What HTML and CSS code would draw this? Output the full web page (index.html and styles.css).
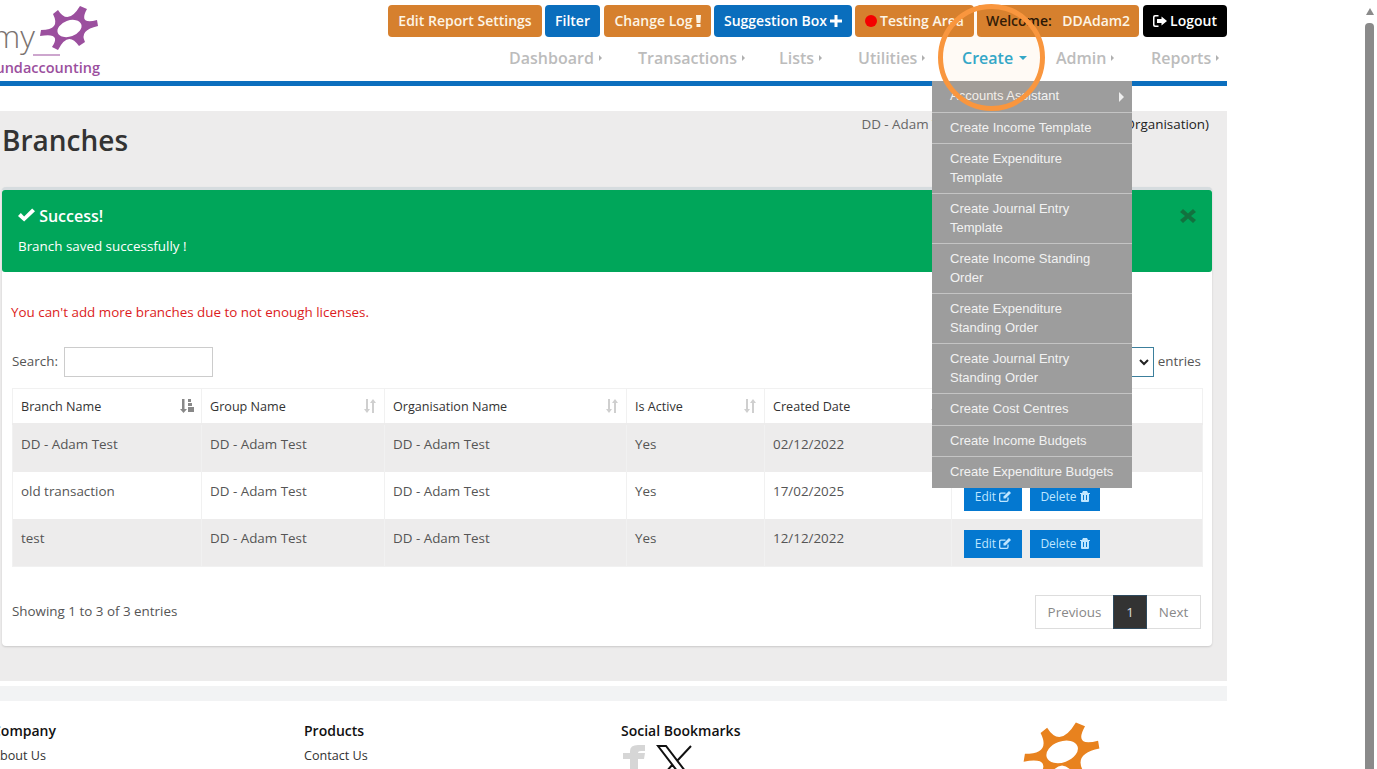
FILE: index.html
```html
<!DOCTYPE html>
<html lang="en">
<head>
<meta charset="UTF-8">
<title>Branches</title>
<link rel="stylesheet" href="styles.css">
</head>
<body>

<svg class="defs" width="0" height="0">
<symbol id="star" viewBox="38 5 62 48">
<path fill="currentColor" d="M80 6 L87 9 Q78 25 97 20 L98 26 Q79 30 85 42 L79 46 Q68 30 58 50 L52 47 Q62 32 40 36 L41 30 Q61 30 53 14 L58 10 Q68 26 80 6 Z"/>
<ellipse cx="69.500" cy="28.500" rx="12.500" ry="8" transform="rotate(-20 69.500 28.500)" fill="#fff"/>
</symbol>
</svg>

<div class="page">

<header class="top">
<svg class="logo" width="101" height="78" viewBox="0 0 101 78">
<text x="35" y="48" text-anchor="end" class="logo-my">my</text>
<rect x="33" y="54.500" width="27" height="1" fill="#9b4f9e"/>
<use href="#star" x="38" y="5" width="62" height="48" color="#9b4f9e"/>
<text x="100" y="73" text-anchor="end" class="logo-name">fundaccounting</text>
</svg>

<div class="top-right">
<div class="btn-row">
<a class="tbtn orange w1">Edit Report Settings</a>
<a class="tbtn blue w2">Filter</a>
<a class="tbtn orange w3">Change Log <svg class="ico" width="5" height="12" viewBox="0 0 5 12"><path fill="currentColor" d="M0 0h5l-.6 8H.6zM.5 9h4v3h-4z"/></svg></a>
<a class="tbtn blue w4">Suggestion Box <svg class="ico" width="12" height="12" viewBox="0 0 12 12"><path fill="currentColor" d="M4.500 0h3v4.500H12v3H7.500V12h-3V7.500H0v-3h4.500z"/></svg></a>
<a class="tbtn orange w5"><span class="dot"></span>Testing Area</a>
<a class="tbtn orange w6"><span class="dark">Welcome:</span>&nbsp; DDAdam2</a>
<a class="tbtn black w7"><svg class="ico" width="14" height="12" viewBox="0 0 14 12"><path fill="currentColor" d="M5.500 0v1.500H2.500q-1 0-1 1v7q0 1 1 1h3V12H2Q0 12 0 10V2Q0 0 2 0zM8.500 1.500 14 6l-5.500 4.500V8H4V4h4.500z"/></svg> Logout</a>
</div>
<nav class="menu">
<a class="m1">Dashboard<i class="arr"></i></a>
<a class="m2">Transactions<i class="arr"></i></a>
<a class="m3">Lists<i class="arr"></i></a>
<a class="m4">Utilities<i class="arr"></i></a>
<a class="m5 active">Create<i class="caret"></i></a>
<a class="m6">Admin<i class="arr"></i></a>
<a class="m7">Reports<i class="arr"></i></a>
</nav>
</div>
</header>

<main class="content">
<div class="title-row">
<h1>Branches</h1>
<p class="context"><span>DD - Adam Test (Group) - DD - Adam Test</span> (Organisation)</p>
</div>

<section class="box">
<div class="alert">
<div>
<h4><svg class="ico" width="17" height="14" viewBox="0 0 18 14"><path fill="currentColor" d="M0 8l3-3 3.500 3.500L15 0l3 3L6.500 14z"/></svg> Success!</h4>
<p>Branch saved successfully !</p>
</div>
<svg class="close" width="16" height="14" viewBox="0 0 16 14"><path fill="currentColor" d="M0 3 3 0l5 4.500L13 0l3 3-5 4 5 4-3 3-5-4.500L3 14l-3-3 5-4z"/></svg>
</div>

<p class="warn">You can't add more branches due to not enough licenses.</p>

<div class="tools">
<label class="search">Search: <input type="text"></label>
<label class="length"><span class="select"><svg width="10" height="7" viewBox="0 0 10 7"><path fill="none" stroke="#222" stroke-width="2" d="M1 1l4 4 4-4"/></svg></span> entries</label>
</div>

<table class="grid">
<thead>
<tr>
<th>Branch Name<svg class="sort on" width="14" height="14" viewBox="0 0 14 14"><path fill="currentColor" d="M2 0h2.500v10H7l-3.500 4L0 10h2zM8 0h3v3H8zM8 4h4v3H8zM8 8h6v5H8z"/></svg></th>
<th>Group Name<svg class="sort" width="14" height="14" viewBox="0 0 14 14"><path fill="currentColor" d="M3 0h2v10h2l-3 4-3-4h2zM9 4H7l3-4 3 4h-2v10H9z"/></svg></th>
<th>Organisation Name<svg class="sort" width="14" height="14" viewBox="0 0 14 14"><path fill="currentColor" d="M3 0h2v10h2l-3 4-3-4h2zM9 4H7l3-4 3 4h-2v10H9z"/></svg></th>
<th>Is Active<svg class="sort" width="14" height="14" viewBox="0 0 14 14"><path fill="currentColor" d="M3 0h2v10h2l-3 4-3-4h2zM9 4H7l3-4 3 4h-2v10H9z"/></svg></th>
<th>Created Date<svg class="sort" width="14" height="14" viewBox="0 0 14 14"><path fill="currentColor" d="M3 0h2v10h2l-3 4-3-4h2zM9 4H7l3-4 3 4h-2v10H9z"/></svg></th>
<th></th>
</tr>
</thead>
<tbody>
<tr>
<td>DD - Adam Test</td><td>DD - Adam Test</td><td>DD - Adam Test</td><td>Yes</td><td>02/12/2022</td>
<td class="acts"><a class="act edit">Edit <svg width="12" height="11" viewBox="0 0 12 11"><path fill="none" stroke="currentColor" stroke-width="1.300" d="M9 6.500V9q0 1.300-1.300 1.300H2Q.7 10.300.7 9V3.500q0-1.300 1.300-1.300h4.500"/><path fill="currentColor" d="M10 0l2 2-5.500 5.500H4.500v-2z"/></svg></a><a class="act del">Delete <svg width="10" height="11" viewBox="0 0 10 11"><path fill="currentColor" d="M0 2h10v1H9v7q0 1-1 1H2q-1 0-1-1V3H0zM3 0h4l1 2H2zM3 4v5h1V4zM6 4v5h1V4z"/></svg></a></td>
</tr>
<tr>
<td>old transaction</td><td>DD - Adam Test</td><td>DD - Adam Test</td><td>Yes</td><td>17/02/2025</td>
<td class="acts"><a class="act edit">Edit <svg width="12" height="11" viewBox="0 0 12 11"><path fill="none" stroke="currentColor" stroke-width="1.300" d="M9 6.500V9q0 1.300-1.300 1.300H2Q.7 10.300.7 9V3.500q0-1.300 1.300-1.300h4.500"/><path fill="currentColor" d="M10 0l2 2-5.500 5.500H4.500v-2z"/></svg></a><a class="act del">Delete <svg width="10" height="11" viewBox="0 0 10 11"><path fill="currentColor" d="M0 2h10v1H9v7q0 1-1 1H2q-1 0-1-1V3H0zM3 0h4l1 2H2zM3 4v5h1V4zM6 4v5h1V4z"/></svg></a></td>
</tr>
<tr>
<td>test</td><td>DD - Adam Test</td><td>DD - Adam Test</td><td>Yes</td><td>12/12/2022</td>
<td class="acts"><a class="act edit">Edit <svg width="12" height="11" viewBox="0 0 12 11"><path fill="none" stroke="currentColor" stroke-width="1.300" d="M9 6.500V9q0 1.300-1.300 1.300H2Q.7 10.300.7 9V3.500q0-1.300 1.300-1.300h4.500"/><path fill="currentColor" d="M10 0l2 2-5.500 5.500H4.500v-2z"/></svg></a><a class="act del">Delete <svg width="10" height="11" viewBox="0 0 10 11"><path fill="currentColor" d="M0 2h10v1H9v7q0 1-1 1H2q-1 0-1-1V3H0zM3 0h4l1 2H2zM3 4v5h1V4zM6 4v5h1V4z"/></svg></a></td>
</tr>
</tbody>
</table>

<div class="table-foot">
<span>Showing 1 to 3 of 3 entries</span>
<div class="pager">
<a class="p-prev">Previous</a>
<a class="p-num">1</a>
<a class="p-next">Next</a>
</div>
</div>
</section>
</main>

<div class="strip"></div>

<footer class="foot">
<div>
<h5>Company</h5>
<a>About Us</a>
</div>
<div>
<h5>Products</h5>
<a>Contact Us</a>
</div>
<div>
<h5>Social Bookmarks</h5>
<div class="social">
<svg width="24" height="30" viewBox="0 0 24 30"><path fill="#d6d6d6" d="M8 30V14H1V8h7V6q0-6 8-6h7v6h-4q-3 0-3 2v0h7l-1 6h-6v16z"/></svg>
<svg width="38" height="36" viewBox="0 0 38 36"><path fill="none" stroke="#111" stroke-width="2" d="M2 1h8l26 34h-8zM35 1 21 16M3 35l14-16"/></svg>
</div>
</div>
<svg class="foot-logo" width="81" height="63"><use href="#star" width="81" height="63" color="#e8821e"/></svg>
</footer>

<ul class="dropdown">
<li class="has-sub">Accounts Assistant</li>
<li>Create Income Template</li>
<li>Create Expenditure Template</li>
<li>Create Journal Entry Template</li>
<li>Create Income Standing Order</li>
<li>Create Expenditure Standing Order</li>
<li>Create Journal Entry Standing Order</li>
<li>Create Cost Centres</li>
<li>Create Income Budgets</li>
<li>Create Expenditure Budgets</li>
</ul>
<div class="ring"></div>

</div>

<aside class="scrollbar">
<i class="sb-up"></i>
<i class="sb-thumb"></i>
</aside>

</body>
</html>
```

FILE: styles.css
```css
html, body{
    margin:0;
    height:769px;
    overflow:hidden;
    background:white;
}

body{
    display:flex;
    justify-content:space-between;
    font-family:"Open Sans", sans-serif;
    font-size:13.4px;
    line-height:20px;
    color:#555;
}

.defs{
    position:absolute;
}

.page{
    position:relative;
    width:1227px;
    flex:none;
    overflow:hidden;
}

/* top bar */
.top{
    display:flex;
    justify-content:space-between;
    height:81px;
    border-bottom:5px solid #0c6fbe;
    margin-bottom:25px;
}

.logo{
    display:block;
    flex:none;
}

.logo-my{
    font-family:"Open Sans", sans-serif;
    font-weight:300;
    font-size:32px;
    fill:#7b7370;
}

.logo-name{
    font-family:"Open Sans", sans-serif;
    font-weight:600;
    font-size:14.5px;
    fill:#9b4f9e;
}

.top-right{
    display:flex;
    flex-direction:column;
    align-items:flex-end;
}

.btn-row{
    display:flex;
    margin-top:5px;
    gap:3px;
}

.tbtn{
    display:flex;
    align-items:center;
    justify-content:center;
    gap:3px;
    height:32px;
    border-radius:4px;
    color:#fdf5e6;
    font-weight:600;
    font-size:14px;
    white-space:nowrap;
}

.orange{ background:#d6802e; }
.blue{ background:#0a6ebd; color:white; }
.black{ background:black; color:white; }

.w1{ width:154px; }
.w2{ width:55px; }
.w3{ width:107px; margin-left:1px; }
.w4{ width:138px; }
.w5{ width:119px; }
.w6{ width:162px; }
.w7{ width:84px; margin-left:1px; }

.dot{
    width:12px;
    height:12px;
    border-radius:50%;
    background:#f40000;
}

.dark{
    color:#2a1605;
}

.menu{
    display:flex;
    align-items:center;
    margin-top:6px;
    height:30px;
    font-size:16px;
    font-weight:600;
    color:#bcbcbc;
    white-space:nowrap;
}

.menu a{
    display:flex;
    align-items:center;
}

.m1{ width:129px; }
.m2{ width:141px; }
.m3{ width:79px; }
.m4{ width:104px; }
.m5{ width:94px; }
.m6{ width:95px; }
.m7{ width:76px; }

.arr{
    width:0;
    height:0;
    margin-left:5px;
    border-left:3px solid #b0b0b0;
    border-top:3px solid transparent;
    border-bottom:3px solid transparent;
}

.active{
    color:#2aa8cf;
}

.caret{
    width:0;
    height:0;
    margin-left:6px;
    border-top:4px solid #2aa8cf;
    border-left:4px solid transparent;
    border-right:4px solid transparent;
}

/* main area */
.content{
    background:#edecec;
    padding:0 15px 35px 2px;
    height:570px;
    box-sizing:border-box;
}

.title-row{
    display:flex;
    justify-content:space-between;
    height:76px;
}

h1{
    margin:0;
    padding-top:11px;
    font-size:28px;
    line-height:36px;
    font-weight:600;
    color:#333;
}

.context{
    margin:3px 3px 0 0;
    color:#222;
}

.context span{
    color:#666;
}

.box{
    background:white;
    border-top:3px solid #d6dcdf;
    border-radius:4px;
    height:459px;
    box-sizing:border-box;
    box-shadow:0 1px 2px rgba(0,0,0,0.15);
}

.alert{
    display:flex;
    justify-content:space-between;
    background:#00a65a;
    color:white;
    height:82px;
    border-radius:3px;
    padding:15px 16px;
    box-sizing:border-box;
}

.alert h4{
    margin:0;
    font-size:16px;
    line-height:22px;
    font-weight:600;
}

.alert p{
    margin:9px 0 0;
    line-height:20px;
}

.close{
    margin-top:4px;
    color:#12723f;
}

.warn{
    margin:30px 0 0 9px;
    color:#dc1c22;
}

.tools{
    display:flex;
    justify-content:space-between;
    margin:25px 11px 0 10px;
    height:30px;
    align-items:center;
}

.search input{
    width:149px;
    height:30px;
    box-sizing:border-box;
    border:1px solid #ccc;
    margin-left:3px;
    padding:0;
    vertical-align:middle;
}

.length{
    display:flex;
    align-items:flex-start;
    gap:4px;
    height:30px;
    line-height:28px;
}

.select{
    display:flex;
    align-items:center;
    justify-content:flex-end;
    width:60px;
    height:30px;
    box-sizing:border-box;
    border:1px solid #3c7f9c;
    padding-right:4px;
}

/* table */
.grid{
    table-layout:fixed;
    border-collapse:collapse;
    width:1191px;
    margin:11px 0 0 10px;
    border:1px solid #f1f1f1;
}

.grid th{
    position:relative;
    box-sizing:border-box;
    height:35px;
    padding:2px 8px 0;
    text-align:left;
    font-weight:400;
    font-size:12.6px;
    color:#333;
    border-right:1px solid #f1f1f1;
    border-bottom:2px solid #edecec;
}

.grid th:nth-child(1){ width:189px; }
.grid th:nth-child(2){ width:183px; }
.grid th:nth-child(3){ width:242px; }
.grid th:nth-child(4){ width:138px; }
.grid th:nth-child(5){ width:187px; }

.sort{
    position:absolute;
    right:7px;
    top:10px;
    color:#cfcfcf;
}

.sort.on{
    color:#888;
}

.grid td{
    padding:9px 8px 18px;
    vertical-align:top;
    border-right:1px solid #f1f1f1;
}

.grid tbody tr:nth-child(odd){
    background:#edecec;
}

.grid td.acts{
    padding:11px 0 8px 12px;
    font-size:12px;
    white-space:nowrap;
}

.act{
    display:inline-flex;
    align-items:center;
    justify-content:center;
    gap:3px;
    height:28px;
    background:#0478d0;
    color:#bfe6ff;
    vertical-align:top;
}

.edit{
    width:58px;
    margin-right:8px;
}

.del{
    width:70px;
}

.table-foot{
    display:flex;
    justify-content:space-between;
    align-items:center;
    margin:28px 11px 0 10px;
    height:34px;
}

.table-foot > span{
    margin-top:-1px;
}

.pager{
    display:flex;
    height:34px;
    box-sizing:border-box;
    border:1px solid #ddd;
    line-height:32px;
    color:#888;
}

.pager a{
    text-align:center;
}

.p-prev{ width:77px; }
.p-next{ width:53px; }

.p-num{
    width:34px;
    margin:-1px 0;
    height:34px;
    line-height:32px;
    background:#333;
    color:#ddd;
    border:1px solid #2e4a5e;
    box-sizing:border-box;
}

.strip{
    height:15px;
    margin-top:5px;
    background:#f2f3f4;
}

/* footer */
.foot{
    display:grid;
    grid-template-columns:312px 317px 400px auto;
    margin-left:-8px;
    padding-top:20px;
    color:#333;
}

.foot h5{
    margin:0 0 5px;
    font-size:14px;
    line-height:20px;
    font-weight:600;
    color:#111;
}

.foot a{
    display:block;
    font-size:12.6px;
}

.social{
    display:flex;
    gap:10px;
    margin-left:1px;
    margin-top:-1px;
}

/* create menu */
.dropdown{
    position:absolute;
    top:81px;
    left:932px;
    width:200px;
    margin:0;
    padding:0;
    list-style:none;
    background:#9d9d9d;
    color:#f2f2f2;
    font-family:"Liberation Sans", Arial, sans-serif;
    font-size:13px;
    line-height:18.5px;
}

.dropdown li{
    position:relative;
    padding:6px 18px;
    border-bottom:1px solid #c4c4c4;
}

.dropdown li:last-child{
    border-bottom:none;
}

.has-sub::after{
    content:"";
    position:absolute;
    right:8px;
    top:11px;
    border-left:5px solid #eee;
    border-top:5px solid transparent;
    border-bottom:5px solid transparent;
}

.ring{
    position:absolute;
    left:938px;
    top:4px;
    width:107px;
    height:107px;
    box-sizing:border-box;
    border:5px solid #f9963e;
    border-radius:50%;
    background:rgba(250,150,60,0.05);
}

/* fake browser scrollbar */
.scrollbar{
    display:flex;
    flex-direction:column;
    align-items:center;
    width:9px;
    margin-right:3px;
    padding-top:8px;
    box-sizing:border-box;
}

.sb-up{
    width:0;
    height:0;
    border-left:4.500px solid transparent;
    border-right:4.500px solid transparent;
    border-bottom:7px solid #8a8a8a;
}

.sb-thumb{
    width:9px;
    flex:1;
    margin-top:8px;
    background:#8a8a8a;
    border-radius:4px 4px 0 0;
}
```
